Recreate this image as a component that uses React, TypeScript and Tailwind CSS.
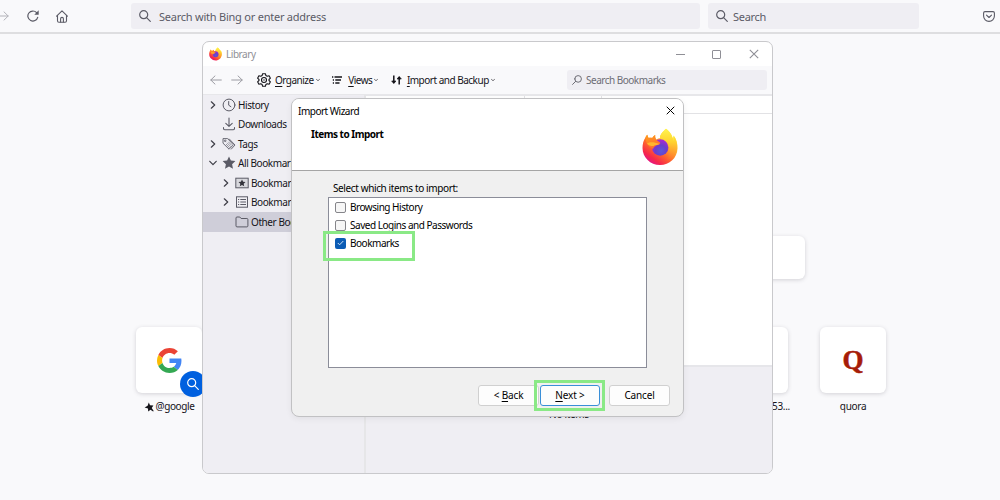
import type { ReactNode } from "react"

type IconProps = { className?: string }

function FirefoxLogo({ className }: IconProps) {
  return (
    <svg viewBox="0 0 36 38" className={className} fill="none">
      <defs>
        <linearGradient id="fx-body" x1="30" y1="5" x2="8" y2="35" gradientUnits="userSpaceOnUse">
          <stop offset="0.05" stopColor="#fff44f" />
          <stop offset="0.35" stopColor="#ffb02e" />
          <stop offset="0.6" stopColor="#ff6a2b" />
          <stop offset="0.85" stopColor="#f6274b" />
          <stop offset="1" stopColor="#e31587" />
        </linearGradient>
        <linearGradient id="fx-flame" x1="25" y1="1" x2="25" y2="30" gradientUnits="userSpaceOnUse">
          <stop stopColor="#fff44f" />
          <stop offset="0.45" stopColor="#ffd22e" />
          <stop offset="1" stopColor="#ff7a2b" stopOpacity="0.3" />
        </linearGradient>
        <radialGradient id="fx-globe" cx="19" cy="23" r="11" gradientUnits="userSpaceOnUse">
          <stop stopColor="#5b57dc" />
          <stop offset="0.5" stopColor="#6a3fcb" />
          <stop offset="1" stopColor="#a929d0" />
        </radialGradient>
        <linearGradient id="fx-head" x1="5" y1="8" x2="12" y2="24" gradientUnits="userSpaceOnUse">
          <stop stopColor="#ff9a1f" />
          <stop offset="1" stopColor="#ff6033" />
        </linearGradient>
      </defs>
      <path
        d="M24 0.8C26.5 2.4 29.6 5.8 30.7 10.2C31.2 9.4 31.5 8.4 31.5 7.6C34.2 10.6 35.7 15.4 35.5 20.4C35.2 29.8 27.6 37 18 37C8.300 37 0.600 29.500 0.500 20C0.500 16.200 1.400 12.200 3.500 9.500C3.700 8.700 4.700 7.500 5.300 6.800C5.500 8.100 6 9.200 6.600 9.900C8.300 9.500 9.200 9.700 10.300 10.100C11 8.800 12 7.700 13.200 7.100C13 8.800 13.200 10.500 14.300 11.600C15.500 10.700 17 10.200 18.200 10.200C17.500 6.700 21 3.800 24 0.800Z"
        fill="url(#fx-body)"
      />
      <path
        d="M24 0.800C27.500 3 31 8 31.200 13C32 11 32 9 31.500 7.600C34.500 11 35.800 17 35 22C33 30 28 32 25 31C29 27 29 20 25.500 15.500C23.500 12.800 19.500 12 18.200 10.200C17.500 6.700 21 3.800 24 0.800Z"
        fill="url(#fx-flame)"
      />
      <circle cx="18.200" cy="19.500" r="8.200" fill="url(#fx-globe)" />
      <path
        d="M3.500 9.500C3.700 8.700 4.700 7.500 5.300 6.800C5.500 8.100 6 9.200 6.600 9.900C8.300 9.500 9.200 9.700 10.300 10.100C11 8.800 12 7.700 13.200 7.100C13 9 13.400 11 14.800 12.200C15.500 13 17.500 13.500 18.300 15C18 16.400 16 16.900 14.500 17.200C12.900 18 11.800 19 11 21C8 19 4 17 3.500 9.500Z"
        fill="url(#fx-head)"
      />
      <path d="M5 15.500C8 13.500 12 13.800 17.500 16C15.500 17.200 13 16.800 11.500 18C8.500 18 6.500 17.500 5 15.500Z" fill="#ffb52e" />
    </svg>
  )
}

function GoogleLogo({ className }: IconProps) {
  return (
    <svg viewBox="0 0 48 48" className={className}>
      <path fill="#ea4335" d="M24 9.500c3.540 0 6.710 1.220 9.210 3.600l6.850-6.850C35.900 2.380 30.470 0 24 0 14.620 0 6.510 5.380 2.560 13.220l7.980 6.190C12.430 13.720 17.740 9.500 24 9.500z" />
      <path fill="#4285f4" d="M46.980 24.550c0-1.570-.15-3.090-.38-4.550H24v9.020h12.940c-.58 2.960-2.260 5.480-4.780 7.180l7.730 6c4.510-4.180 7.090-10.360 7.090-17.650z" />
      <path fill="#fbbc05" d="M10.530 28.590c-.48-1.450-.76-2.990-.76-4.590s.27-3.140.76-4.590l-7.980-6.190C.92 16.460 0 20.120 0 24c0 3.880.92 7.540 2.560 10.780l7.970-6.190z" />
      <path fill="#34a853" d="M24 48c6.480 0 11.930-2.130 15.890-5.810l-7.730-6c-2.150 1.450-4.920 2.300-8.160 2.300-6.260 0-11.570-4.220-13.470-9.910l-7.980 6.190C6.510 42.620 14.620 48 24 48z" />
    </svg>
  )
}

function SearchIcon({ className }: IconProps) {
  return (
    <svg viewBox="0 0 12 12" className={className} fill="none" stroke="currentColor" strokeWidth="1.200" strokeLinecap="round">
      <circle cx="4.700" cy="4.700" r="4" />
      <path d="M7.600 7.600l3.700 3.700" />
    </svg>
  )
}

function ArrowIcon({ className }: IconProps) {
  return (
    <svg viewBox="0 0 12 10" className={className} fill="none" stroke="currentColor" strokeLinecap="round" strokeLinejoin="round">
      <path d="M0.700 5h10.500M7 0.900L11.200 5L7 9.100" />
    </svg>
  )
}

function ReloadIcon({ className }: IconProps) {
  return (
    <svg viewBox="0 0 12 12" className={className} fill="none">
      <path d="M10.700 7.300A5 5 0 1 1 9.600 2.700" stroke="currentColor" strokeWidth="1.200" strokeLinecap="round" />
      <path d="M11.700 0.300v4.400H7.300z" fill="currentColor" />
    </svg>
  )
}

function HomeIcon({ className }: IconProps) {
  return (
    <svg viewBox="0 0 12 13" className={className} fill="none" stroke="currentColor" strokeWidth="1.100" strokeLinejoin="round" strokeLinecap="round">
      <path d="M0.600 6.200L6 0.900l5.400 5.300M1.500 5.600v5.200q0 1.400 1.400 1.400h6.200q1.400 0 1.400-1.400V5.600" />
      <path d="M4.600 12V8.700q0-1.300 1.400-1.300t1.400 1.300V12" />
    </svg>
  )
}

function PocketIcon({ className }: IconProps) {
  return (
    <svg viewBox="0 0 12 11" className={className} fill="none" stroke="currentColor" strokeWidth="1.100" strokeLinejoin="round" strokeLinecap="round">
      <path d="M2 0.600h8q1.400 0 1.400 1.400v3a5.400 5.400 0 0 1-10.800 0V2Q0.600 0.600 2 0.600z" />
      <path d="M3.500 4.100L6 6.500l2.500-2.400" />
    </svg>
  )
}

function GearIcon({ className }: IconProps) {
  return (
    <svg viewBox="0 0 14 14" className={className} fill="none" stroke="currentColor" strokeWidth="1.100" strokeLinejoin="round">
      <path d="M5.600 0.700h2.800l.5 1.900 1.300.7 1.900-.5 1.300 2.400L12 6.500v1l1.400 1.300-1.300 2.400-1.900-.5-1.300.7-.5 1.900H5.600l-.5-1.900-1.300-.7-1.900.5L.6 8.800 2 7.500v-1L.6 5.200l1.300-2.400 1.900.5 1.300-.7z" />
      <circle cx="7" cy="7" r="2.500" />
      <circle cx="7" cy="7" r="0.700" fill="currentColor" strokeWidth="0" />
    </svg>
  )
}

function ListIcon({ className }: IconProps) {
  return (
    <svg viewBox="0 0 10 8" className={className} stroke="currentColor" strokeWidth="1.300">
      <path d="M0 1h1.300M2.500 1H10M0.800 4h1.200M3.300 4h5.700M0.800 7h1.200M3.300 7h4.200" />
    </svg>
  )
}

function SortIcon({ className }: IconProps) {
  return (
    <svg viewBox="0 0 11 10" className={className} fill="none" stroke="currentColor" strokeWidth="1.500">
      <path d="M2.800 0.500v7.500M8.200 9.500V2" />
      <path d="M0.700 6l2.100 2.600L4.900 6zM6.100 4l2.100-2.600L10.300 4z" fill="currentColor" strokeWidth="0.700" />
    </svg>
  )
}

function Chevron({ className }: IconProps) {
  return (
    <svg viewBox="0 0 8 8" className={className} fill="none" stroke="currentColor" strokeWidth="1.200" strokeLinecap="round" strokeLinejoin="round">
      <path d="M2.300 0.800L5.700 4L2.300 7.200" />
    </svg>
  )
}

function CloseIcon({ className }: IconProps) {
  return (
    <svg viewBox="0 0 10 10" className={className} stroke="currentColor" strokeWidth="1.100">
      <path d="M0.800 0.800l8.400 8.400M9.200 0.800L0.800 9.200" />
    </svg>
  )
}

function ClockIcon() {
  return (
    <svg viewBox="0 0 14 14" className="size-[14px]" fill="none" stroke="#5b5b66" strokeWidth="1" strokeLinecap="round">
      <circle cx="7" cy="7" r="5.900" />
      <path d="M6.700 3.500V7.200L8.900 8.700" />
    </svg>
  )
}

function DownloadIcon() {
  return (
    <svg viewBox="0 0 14 14" className="size-[14px]" fill="none" stroke="#5b5b66" strokeWidth="1.100" strokeLinecap="round" strokeLinejoin="round">
      <path d="M7 1v8.300M3.800 6.300L7 9.400l3.200-3.100M1.500 10.500v1q0 1.200 1.200 1.200h8.600q1.200 0 1.200-1.200v-1" />
    </svg>
  )
}

function TagIcon() {
  return (
    <svg viewBox="0 0 14 14" className="size-[14px]" fill="none" stroke="#5b5b66" strokeWidth="0.900" strokeLinejoin="round">
      <path d="M1 1.600h4.600l5.800 6.200-4.300 4.400L1 6.200z" />
      <path d="M7 1.700l6 6.300-4 4.400" />
      <circle cx="3.200" cy="3.800" r="0.800" />
      <path d="M5 5.800l4 4M6.300 4.800l3.400 3.500M4 7l3.700 3.800" strokeWidth="0.600" />
    </svg>
  )
}

function StarIcon() {
  return (
    <svg viewBox="0 0 14 14" className="size-[14px]" fill="#5b5b66">
      <path d="M7 .6l1.900 4 4.500.5-3.300 3.100.9 4.500L7 10.500l-4 2.200.9-4.500L.6 5.100l4.500-.5z" />
    </svg>
  )
}

function ToolbarFolderIcon() {
  return (
    <svg viewBox="0 0 14 12" className="h-3 w-[14px]" fill="none">
      <rect x="0.800" y="1.200" width="12.400" height="9.600" fill="#d8d8dd" stroke="#5b5b66" />
      <path d="M7 2.400l1.100 2.300 2.400.3-1.800 1.700.5 2.500L7 8l-2.200 1.200.5-2.500L3.500 5l2.400-.3z" fill="#33333b" />
    </svg>
  )
}

function MenuFolderIcon() {
  return (
    <svg viewBox="0 0 14 12" className="h-3 w-[14px]" fill="none" stroke="#5b5b66">
      <rect x="1.500" y="0.800" width="11" height="10.400" />
      <path d="M3 3.500h1.200M5.300 3.500h5.700M3 6h1.200M5.300 6h5.700M3 8.500h1.200M5.300 8.500h5.700" />
    </svg>
  )
}

function FolderIcon() {
  return (
    <svg viewBox="0 0 14 12" className="h-3 w-[14px]" fill="none" stroke="#5b5b66" strokeLinejoin="round">
      <path d="M1 2q0-1 1-1h2.800l1.300 1.500H11.900q1 0 1 1V9.900q0 1-1 1H2q-1 0-1-1z" />
    </svg>
  )
}

function PinIcon() {
  return (
    <svg viewBox="0 0 10 10" className="size-[10px]" fill="#15141a">
      <path d="M4.800.4L6 3.200l3.400.3-1.700 2.500 2 2.900-.6.600-2.600-1.700-2.300 1.600-.2-2.800L.6 5.400l3-1.600z" />
    </svg>
  )
}

type TreeItem = {
  label: string
  icon: ReactNode
  nested?: boolean
  arrow?: "right" | "down"
  selected?: boolean
}

const TREE: TreeItem[] = [
  { label: "History", icon: <ClockIcon />, arrow: "right" },
  { label: "Downloads", icon: <DownloadIcon /> },
  { label: "Tags", icon: <TagIcon />, arrow: "right" },
  { label: "All Bookmarks", icon: <StarIcon />, arrow: "down" },
  { label: "Bookmarks Toolbar", icon: <ToolbarFolderIcon />, arrow: "right", nested: true },
  { label: "Bookmarks Menu", icon: <MenuFolderIcon />, arrow: "right", nested: true },
  { label: "Other Bookmarks", icon: <FolderIcon />, nested: true, selected: true },
]

function TreeRow({ item }: { item: TreeItem }) {
  return (
    <div
      className={`flex h-[19.500px] items-center ${item.nested ? "pl-[18px]" : "pl-[5px]"} ${
        item.selected ? "bg-[#cfced9]" : ""
      }`}
    >
      <span className="flex w-[14px] shrink-0 items-center pl-px text-[#3f3f48]">
        {item.arrow && <Chevron className={item.arrow === "down" ? "size-2 rotate-90" : "size-2"} />}
      </span>
      <span className="shrink-0">{item.icon}</span>
      <span className="ml-[2px] pt-px whitespace-nowrap">{item.label}</span>
    </div>
  )
}

function ToolbarMenu({ icon, hotkey, rest }: { icon: ReactNode; hotkey: string; rest: string }) {
  return (
    <div className="flex items-center whitespace-nowrap">
      {icon}
      <span className="pt-px tracking-[-0.5px]">
        <u className="underline-offset-2">{hotkey}</u>
        {rest}
      </span>
      <Chevron className="ml-[2px] size-1 rotate-90" />
    </div>
  )
}

function LibraryWindow() {
  return (
    <section className="absolute top-[41px] left-[202px] flex h-[433px] w-[571px] flex-col overflow-hidden rounded-[7px] border border-[#c9c9cc] bg-white text-[10px] text-[#15141a]">
      <div className="flex h-6 shrink-0 items-center pl-[6px] text-[#8f8f96]">
        <FirefoxLogo className="h-[14px] w-[13px]" />
        <span className="ml-[4px] flex-1 tracking-[-0.45px]">Library</span>
        <span className="mr-[27px] h-px w-[9px] bg-[#8f8f96]" />
        <span className="mr-[28px] size-[9px] rounded-[1px] border border-[#8f8f96]" />
        <CloseIcon className="mr-[13px] size-[10px]" />
      </div>

      <div className="flex h-[30px] shrink-0 items-center border-b-2 border-[#e7e7ea] bg-[#f9f9fb] pr-[5px] pl-[7px]">
        <ArrowIcon className="h-[10px] w-3 rotate-180 text-[#9c9ca3]" />
        <ArrowIcon className="ml-[9px] h-[10px] w-3 text-[#9c9ca3]" />
        <div className="ml-[14px] flex flex-1 items-center gap-[12.500px]">
          <ToolbarMenu icon={<GearIcon className="mr-1 size-[14px]" />} hotkey="O" rest="rganize" />
          <ToolbarMenu icon={<ListIcon className="mr-[6px] h-2 w-[10px]" />} hotkey="V" rest="iews" />
          <ToolbarMenu icon={<SortIcon className="mr-[5px] h-[10px] w-[11px]" />} hotkey="I" rest="mport and Backup" />
        </div>
        <div className="flex h-5 w-[200px] items-center rounded-[3px] bg-[#efeef3] pl-[5px] text-[#6d6d75]">
          <SearchIcon className="size-[10px] -scale-x-100" />
          <span className="ml-1 pt-px tracking-[-0.5px]">Search Bookmarks</span>
        </div>
      </div>

      <div className="flex min-h-0 flex-1">
        <nav className="-mt-px w-[163px] shrink-0 border-r-2 border-[#e6e6e8] bg-[#efeef3] tracking-[-0.42px]">
          {TREE.map((item) => (
            <TreeRow key={item.label} item={item} />
          ))}
        </nav>
        <div className="flex flex-1 flex-col">
          <div className="flex h-[18px] shrink-0 border-b border-[#e2e2e5]">
            <span className="w-[159px] border-r border-[#e2e2e5]" />
            <span className="w-[77px] border-r border-[#e2e2e5]" />
          </div>
          <div className="flex-1" />
          <div className="h-[108px] shrink-0 border-t-2 border-[#e6e6ea] bg-[#efeef3] pt-[40px] text-center tracking-[-0.3px]">
            No items
          </div>
        </div>
      </div>
    </section>
  )
}

const ITEMS = [
  { label: "Browsing History", checked: false },
  { label: "Saved Logins and Passwords", checked: false },
  { label: "Bookmarks", checked: true },
]

function Checkbox({ checked }: { checked: boolean }) {
  if (!checked) return <span className="size-[11px] rounded-[2px] border border-[#85858a] bg-[#f6f6f6]" />
  return (
    <span className="flex size-[11px] items-center justify-center rounded-[2px] bg-[#0b5cb5]">
      <svg viewBox="0 0 7 6" className="h-[6px] w-[7px]" fill="none" stroke="#cfe3f7">
        <path d="M0.800 3l1.800 1.800L6.300 1" />
      </svg>
    </span>
  )
}

function ImportWizard() {
  return (
    <section className="absolute top-[98px] left-[291px] flex h-[319px] w-[393px] flex-col overflow-hidden rounded-[8px] border border-[#c1c1c3] bg-[#f0f0f0] text-[10px] text-black shadow-[0_2px_6px_rgba(0,0,0,0.06)]">
      <header className="flex h-[72px] shrink-0 justify-between border-b border-[#a5a5a5] bg-white pr-[5px] pl-[6px]">
        <div>
          <h1 className="mt-[5px] leading-[14px] tracking-[-0.5px]">Import Wizard</h1>
          <h2 className="mt-[9px] ml-[13px] leading-[14px] font-bold tracking-[-0.5px]">Items to Import</h2>
        </div>
        <div className="flex flex-col items-end">
          <CloseIcon className="mt-[7px] mr-[3px] size-[9px]" />
          <FirefoxLogo className="mt-[13px] h-[38px] w-9" />
        </div>
      </header>

      <div className="flex flex-1 flex-col px-9 pt-[10px]">
        <p className="ml-[5px] h-[16px] leading-[14px] tracking-[-0.38px]">Select which items to import:</p>
        <ul className="h-[171px] border border-[#8b8d99] bg-white pl-[6px] tracking-[-0.48px]">
          {ITEMS.map((item) => (
            <li key={item.label} className="flex h-[18px] items-center gap-[4px]">
              <Checkbox checked={item.checked} />
              {item.label}
            </li>
          ))}
        </ul>
      </div>

      <footer className="flex h-[31px] shrink-0 justify-end pr-[13px] tracking-[-0.15px]">
        <button className="h-[21px] w-[61px] rounded-[3px] border border-[#d0d0d0] bg-[#fdfdfd]">
          &lt; <u className="underline-offset-2">B</u>ack
        </button>
        <button className="ml-px h-[21px] w-[60px] rounded-[3px] border border-[#3a8fd8] bg-[#fdfdfd]">
          <u className="underline-offset-2">N</u>ext &gt;
        </button>
        <button className="ml-[9px] h-[21px] w-[61px] rounded-[3px] border border-[#d0d0d0] bg-[#fdfdfd]">Cancel</button>
      </footer>
    </section>
  )
}

function Tile({ children }: { children?: ReactNode }) {
  return (
    <div className="flex size-[66px] items-center justify-center rounded-[6px] bg-white shadow-[0_1px_4px_rgba(58,57,68,0.2)]">
      {children}
    </div>
  )
}

export default function App() {
  return (
    <main className="relative flex h-[500px] w-[1000px] flex-col overflow-hidden bg-[#f9f9fb] font-['Noto_Sans',sans-serif] text-[#5b5b66]">
      <header className="flex h-[34px] shrink-0 items-center border-b-2 border-[#dedee0] text-[11px]">
        <ArrowIcon className="-ml-[3px] h-[10px] w-3 text-[#b3b3b9]" />
        <ReloadIcon className="ml-[18px] size-3" />
        <HomeIcon className="ml-[17px] h-[13px] w-3" />
        <div className="ml-[63px] flex h-[26px] w-[569px] items-center rounded-[3px] bg-[#efeef3] pl-2">
          <SearchIcon className="size-3" />
          <span className="ml-2 pt-[2px] tracking-[-0.23px]">Search with Bing or enter address</span>
        </div>
        <div className="ml-2 flex h-[26px] w-[211px] items-center rounded-[3px] bg-[#efeef3] pl-2">
          <SearchIcon className="size-3" />
          <span className="ml-[5px] pt-[2px] tracking-[-0.3px]">Search</span>
        </div>
        <PocketIcon className="ml-16 h-[11px] w-3" />
      </header>

      {/* New tab page */}
      <div className="flex flex-1 flex-col pt-[202px] text-[10px] text-[#15141a]">
        <div className="ml-[217px] h-[43px] w-[588px] rounded-[6px] bg-white shadow-[0_1px_4px_rgba(58,57,68,0.2)]" />
        <div className="mt-12 ml-[136px] flex w-[750px]">
          <div className="relative w-[66px]">
            <Tile>
              <GoogleLogo className="size-[25px]" />
            </Tile>
            <span className="absolute top-11 left-11 flex size-[26px] items-center justify-center rounded-full bg-[#0060df] text-white">
              <SearchIcon className="size-3" />
            </span>
            <div className="mt-[6px] flex items-center justify-center gap-[2px] leading-[15px] tracking-[-0.4px]">
              <PinIcon />
              <span>@google</span>
            </div>
          </div>
          <div className="ml-auto w-[68px]">
            <Tile />
            <div className="mt-[6px] text-right leading-[15px] tracking-[-0.3px]">53...</div>
          </div>
          <div className="ml-[30px] w-[66px] text-center">
            <Tile>
              <span className="font-['Liberation_Serif',serif] text-[27px] leading-none font-bold text-[#a61c08] [-webkit-text-stroke:0.500px_#a61c08]">
                Q
              </span>
            </Tile>
            <div className="mt-[6px] leading-[15px] tracking-[-0.3px]">quora</div>
          </div>
        </div>
      </div>

      <LibraryWindow />
      <ImportWizard />

      {/* Highlights around the steps to follow */}
      <div className="absolute top-[231px] left-[323px] h-[30px] w-[92px] border-[3px] border-[#8ae986]" />
      <div className="absolute top-[380px] left-[534px] h-[31px] w-[71px] border-[3px] border-[#8ae986]" />
    </main>
  )
}
